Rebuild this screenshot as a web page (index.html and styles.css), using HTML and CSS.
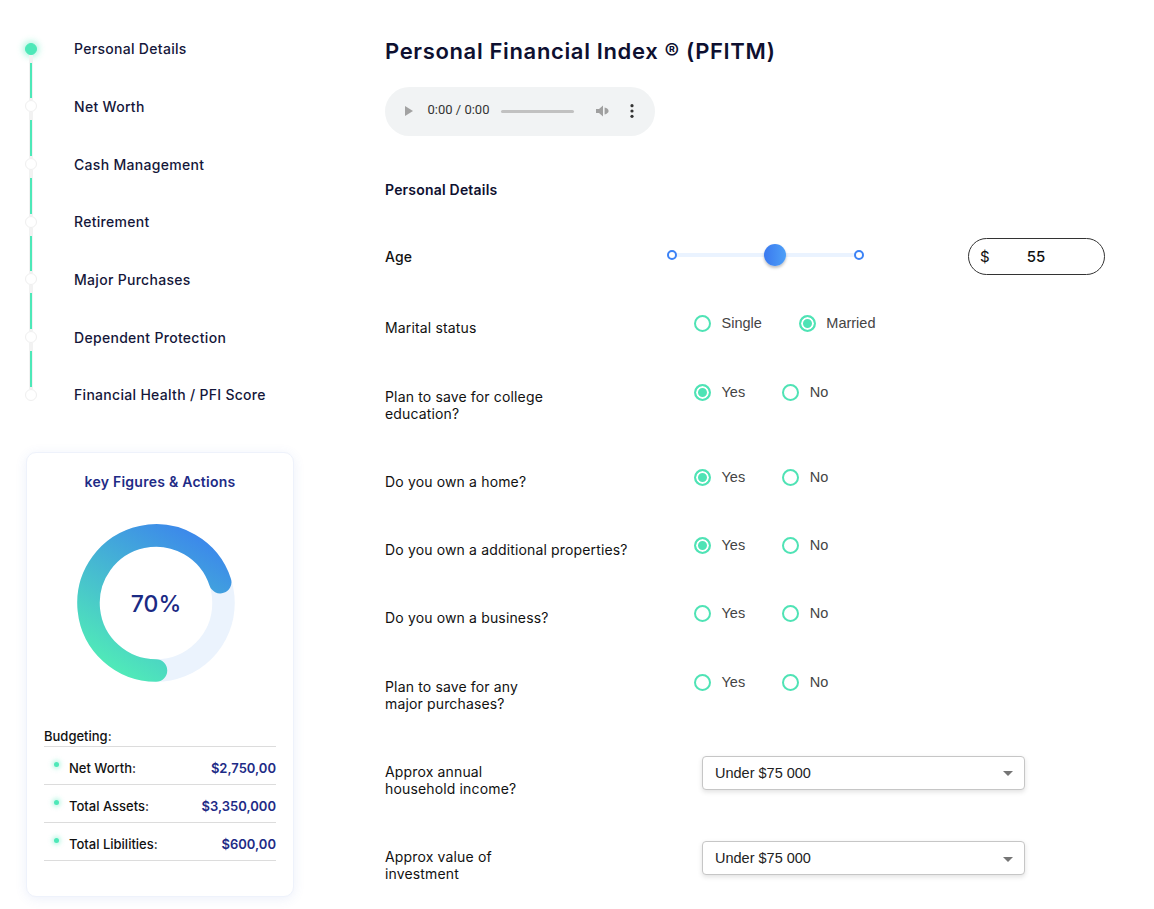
FILE: index.html
```html
<!DOCTYPE html>
<html lang="en">
<head>
	<meta charset="UTF-8">
	<title>Personal Financial Index</title>
	<link rel="stylesheet" href="styles.css">
</head>
<body>
	<div class="page">
		<aside class="side">
			<ul class="steps">
				<li class="step active"><span class="dot"></span>Personal Details</li>
				<li class="step"><span class="dot"></span>Net Worth</li>
				<li class="step"><span class="dot"></span>Cash Management</li>
				<li class="step"><span class="dot"></span>Retirement</li>
				<li class="step"><span class="dot"></span>Major Purchases</li>
				<li class="step"><span class="dot"></span>Dependent Protection</li>
				<li class="step"><span class="dot"></span>Financial Health / PFI Score</li>
			</ul>

			<div class="card">
				<h3 class="card-title">key Figures &amp; Actions</h3>
				<svg class="donut" width="160" height="160" viewBox="0 0 160 160">
					<defs>
						<linearGradient id="ring" gradientUnits="userSpaceOnUse" x1="60" y1="160" x2="150" y2="10">
							<stop offset="0" stop-color="#50eab8"/>
							<stop offset="1" stop-color="#3a7ef0"/>
						</linearGradient>
					</defs>
					<circle cx="80" cy="80" r="67.5" fill="none" stroke="#ebf3fd" stroke-width="22.5"/>
					<path d="M80 147.5 A67.5 67.5 0 1 1 144.2 59.14" fill="none" stroke="url(#ring)" stroke-width="22.5" stroke-linecap="round"/>
					<text x="80" y="81" class="donut-text" text-anchor="middle" dominant-baseline="central">70%</text>
				</svg>

				<div class="budget-title">Budgeting:</div>
				<ul class="budget">
					<li><span class="bullet"></span><span class="name">Net Worth:</span><span class="val">$2,750,00</span></li>
					<li><span class="bullet"></span><span class="name">Total Assets:</span><span class="val">$3,350,000</span></li>
					<li><span class="bullet"></span><span class="name">Total Libilities:</span><span class="val">$600,00</span></li>
				</ul>
			</div>
		</aside>

		<main class="main">
			<h1 class="title">Personal Financial Index &reg; (PFITM)</h1>

			<div class="audio">
				<span class="play"></span>
				<span class="time">0:00 / 0:00</span>
				<span class="bar"></span>
				<svg class="vol" width="14" height="12" viewBox="0 0 14 12">
					<path d="M0 4H3L7 0.5V11.5L3 8H0Z M8.6 2.6C11 3.1 12.6 4.4 12.6 6S11 8.9 8.6 9.4Z" fill="#a0a0a0"/>
				</svg>
				<svg class="more" width="4" height="14" viewBox="0 0 4 14">
					<circle cx="2" cy="1.7" r="1.6" fill="#333"/>
					<circle cx="2" cy="7" r="1.6" fill="#333"/>
					<circle cx="2" cy="12.3" r="1.6" fill="#333"/>
				</svg>
			</div>

			<h4 class="section">Personal Details</h4>

			<div class="row row-age">
				<div class="label">Age</div>
				<div class="range">
					<span class="range-end"></span>
					<span class="range-track"></span>
					<span class="range-end"></span>
					<span class="range-thumb"></span>
				</div>
				<label class="money"><span class="cur">$</span><input type="text" value="55"></label>
			</div>

			<div class="row">
				<div class="label">Marital status</div>
				<div class="choices">
					<label class="choice"><input type="radio" name="marital">Single</label>
					<label class="choice"><input type="radio" name="marital" checked>Married</label>
				</div>
			</div>

			<div class="row">
				<div class="label">Plan to save for college<br>education?</div>
				<div class="choices">
					<label class="choice"><input type="radio" name="college" checked>Yes</label>
					<label class="choice"><input type="radio" name="college">No</label>
				</div>
			</div>

			<div class="row">
				<div class="label">Do you own a home?</div>
				<div class="choices">
					<label class="choice"><input type="radio" name="home" checked>Yes</label>
					<label class="choice"><input type="radio" name="home">No</label>
				</div>
			</div>

			<div class="row">
				<div class="label">Do you own a additional properties?</div>
				<div class="choices">
					<label class="choice"><input type="radio" name="props" checked>Yes</label>
					<label class="choice"><input type="radio" name="props">No</label>
				</div>
			</div>

			<div class="row">
				<div class="label">Do you own a business?</div>
				<div class="choices">
					<label class="choice"><input type="radio" name="business">Yes</label>
					<label class="choice"><input type="radio" name="business">No</label>
				</div>
			</div>

			<div class="row">
				<div class="label">Plan to save for any<br>major purchases?</div>
				<div class="choices">
					<label class="choice"><input type="radio" name="major">Yes</label>
					<label class="choice"><input type="radio" name="major">No</label>
				</div>
			</div>

			<div class="row row-select">
				<div class="label">Approx annual<br>household income?</div>
				<div class="select-wrap">
					<select>
						<option>Under $75 000</option>
						<option>$75 000 - $150 000</option>
						<option>Over $150 000</option>
					</select>
					<span class="caret"></span>
				</div>
			</div>

			<div class="row row-select">
				<div class="label">Approx value of<br>investment</div>
				<div class="select-wrap">
					<select>
						<option>Under $75 000</option>
						<option>$75 000 - $150 000</option>
						<option>Over $150 000</option>
					</select>
					<span class="caret"></span>
				</div>
			</div>
		</main>
	</div>
</body>
</html>
```

FILE: styles.css
```css
*{
	margin: 0;
	padding: 0;
	box-sizing: border-box;
}
body{
	font-family: Inter, "Noto Sans", sans-serif;
	color: #111;
	background: #fff;
}
.page{
	display: flex;
	padding-left: 25px;
}

/* stepper */
.side{
	width: 269px;
	flex: none;
	padding-top: 20px;
}
.steps{
	list-style: none;
}
.step{
	position: relative;
	height: 57.67px;
	display: flex;
	align-items: center;
	font-size: 14px;
	font-weight: 500;
	letter-spacing: 0.3px;
	color: #15173a;
}
.step .dot{
	flex: none;
	width: 12px;
	height: 12px;
	border-radius: 50%;
	background: #fff;
	border: 1px solid #efefef;
	margin-right: 37px;
}
.step.active .dot{
	background: #4de8b8;
	border-color: #4de8b8;
	box-shadow: 0 0 6px 2px rgba(77,232,184,0.45);
}
.step:not(:last-child)::before{
	content: "";
	position: absolute;
	left: 4px;
	top: calc(50% + 6px);
	width: 4px;
	height: 45.67px;
	background: #f2f2f2;
}
.step:not(:last-child)::after{
	content: "";
	position: absolute;
	left: 4.5px;
	top: calc(50% + 14px);
	width: 2px;
	height: 35.67px;
	background: #4de8b8;
}

/* key figures card */
.card{
	width: 268px;
	margin: 28.3px 0 0 1px;
	padding: 20px 17px 35px 17px;
	background: #fff;
	border: 1px solid #eef2fb;
	border-radius: 10px;
	box-shadow: 0 2px 12px rgba(70,110,210,0.10);
}
.card-title{
	text-align: center;
	font-size: 14px;
	font-weight: 600;
	line-height: 17px;
	letter-spacing: 0.25px;
	color: #1e2b86;
}
.donut{
	display: block;
	margin: 33px 0 0 32px;
}
.donut-text{
	font-family: Inter, sans-serif;
	font-size: 23px;
	font-weight: 500;
	fill: #1b2a84;
}
.budget-title{
	margin-top: 45px;
	padding-bottom: 2px;
	font-size: 13px;
	font-weight: 500;
	line-height: 16px;
}
.budget{
	list-style: none;
	border-top: 1px solid #dcdcdc;
}
.budget li{
	height: 38px;
	display: flex;
	align-items: center;
	padding: 5px 0 0 10px;
	border-bottom: 1px solid #dcdcdc;
	font-size: 13px;
}
.budget .bullet{
	flex: none;
	width: 5px;
	height: 5px;
	border-radius: 50%;
	background: #4de8b8;
	box-shadow: 0 0 4px 2px rgba(77,232,184,0.35);
	margin: 0 10px 7px 0;
}
.budget .name{
	font-weight: 500;
	color: #111;
}
.budget .val{
	margin-left: auto;
	font-weight: 600;
	color: #1e2b86;
}

/* main form */
.main{
	margin-left: 91px;
	padding-top: 38px;
	width: 720px;
}
.title{
	font-size: 22px;
	font-weight: 600;
	line-height: 27px;
	letter-spacing: 0.65px;
	color: #0e1030;
}
.audio{
	margin-top: 21.5px;
	width: 270px;
	height: 49px;
	border-radius: 24.5px;
	background: #f1f3f4;
	display: flex;
	align-items: center;
	padding-left: 20px;
}
.audio .play{
	width: 0;
	height: 0;
	border-left: 8px solid #a2a2a2;
	border-top: 5px solid transparent;
	border-bottom: 5px solid transparent;
}
.audio .time{
	width: 59px;
	margin-left: 14.5px;
	margin-bottom: 3px;
	white-space: nowrap;
	font-family: Roboto, "Liberation Sans", sans-serif;
	font-size: 13px;
	color: #333;
}
.audio .bar{
	width: 73px;
	height: 3px;
	margin-left: 14.5px;
	border-radius: 2px;
	background: #c1c1c1;
}
.audio .vol{
	margin-left: 21.7px;
}
.audio .more{
	margin-left: 20px;
}
.section{
	margin-top: 45.5px;
	font-size: 14px;
	font-weight: 600;
	line-height: 17px;
	letter-spacing: 0.2px;
	color: #0e1030;
}

.row{
	display: flex;
	align-items: flex-start;
	margin-bottom: 51.3px;
}
.row .label{
	flex: 0 0 309px;
	font-size: 14px;
	line-height: 17px;
	letter-spacing: 0.15px;
	color: #111;
}
.row-age{
	margin-top: 39.5px;
	margin-bottom: 44.8px;
	height: 37px;
	align-items: center;
}
.row-age .label{
	flex-basis: 282px;
	font-weight: 500;
}
.range{
	position: relative;
	width: 197px;
	height: 22px;
	margin-bottom: 3px;
	display: flex;
	align-items: center;
}
.range-end{
	flex: none;
	width: 10px;
	height: 10px;
	border-radius: 50%;
	border: 2px solid #3b82f6;
	background: #fff;
}
.range-track{
	flex: 1;
	height: 4px;
	background: #eaf3ff;
}
.range-thumb{
	position: absolute;
	left: 97px;
	top: 0;
	width: 22px;
	height: 22px;
	border-radius: 50%;
	background: linear-gradient(90deg, #3a79ef, #4d9ff7);
	box-shadow: 0 2px 3px rgba(0,0,0,0.25);
}
.money{
	margin-left: auto;
	width: 137px;
	height: 37px;
	display: flex;
	align-items: center;
	padding-left: 11px;
	border: 1px solid #333;
	border-radius: 19px;
	font-size: 15px;
	font-weight: 500;
}
.money .cur{
	font-weight: 400;
}
.money input{
	width: 60px;
	margin-left: 37px;
	border: 0;
	outline: 0;
	background: transparent;
	font: inherit;
	color: #111;
}

.choices{
	display: flex;
	margin-top: -4px;
}
.choice{
	display: flex;
	align-items: center;
	margin-right: 37px;
	font-family: "Liberation Sans", Arial, sans-serif;
	font-size: 14.5px;
	line-height: 17px;
	color: #444;
	cursor: pointer;
}
.choice input{
	appearance: none;
	-webkit-appearance: none;
	flex: none;
	width: 17px;
	height: 17px;
	margin: 0 10.5px 0 0;
	border: 2px solid #4fe3b5;
	border-radius: 50%;
	background: #fff;
	outline: 0;
}
.choice input:checked{
	background: #4fe3b5;
	box-shadow: inset 0 0 0 2px #fff;
}

.row-select .label{
	flex-basis: 316.5px;
}
.select-wrap{
	position: relative;
	width: 323px;
	margin-top: -7.5px;
}
.select-wrap select{
	appearance: none;
	-webkit-appearance: none;
	display: block;
	width: 100%;
	height: 34.5px;
	padding-left: 12.5px;
	border: 1px solid #c6c6c6;
	border-radius: 4px;
	background: #fff;
	box-shadow: 0 2px 5px rgba(0,0,0,0.12);
	font-family: "Liberation Sans", Arial, sans-serif;
	font-size: 14.5px;
	color: #222;
	outline: 0;
}
.select-wrap .caret{
	position: absolute;
	right: 12px;
	top: 50%;
	margin-top: -1.5px;
	border-left: 5px solid transparent;
	border-right: 5px solid transparent;
	border-top: 5px solid #757575;
	pointer-events: none;
}
```
